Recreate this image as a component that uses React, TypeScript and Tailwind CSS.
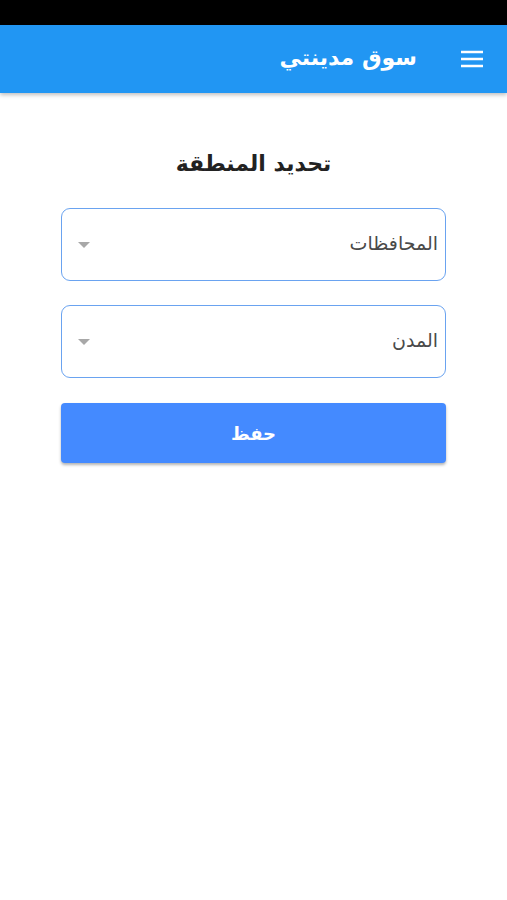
const arabic = { fontFamily: '"DejaVu Sans", "Noto Sans", sans-serif' };

function MenuIcon() {
  return (
    <svg width="24" height="18" viewBox="0 0 24 18" className="text-white">
      <path d="M1 2h22M1 9h22M1 16h22" stroke="currentColor" strokeWidth="2.6" />
    </svg>
  );
}

function SelectBox({ label }: { label: string }) {
  return (
    <div className="flex h-[73px] items-center justify-between rounded-[9px] border border-[#6aa3f0] bg-white pl-[16px] pr-[7px]">
      <span className="pb-[2px] text-[19px] text-[#4a4a4a]">{label}</span>
      <span className="h-0 w-0 border-x-[6px] border-t-[6px] border-x-transparent border-t-[#a8a8a8]" />
    </div>
  );
}

export default function App() {
  return (
    <div dir="rtl" className="min-h-[900px] w-full bg-white" style={arabic}>
      <div className="h-[25px] bg-black" />
      <header className="flex h-[68px] items-center bg-[#2196f3] pr-[23px] shadow-[0_2px_4px_rgba(0,0,0,0.25)]">
        <MenuIcon />
        <h1 className="mr-[43px] pb-[4px] text-[22px] font-bold text-white">سوق مدينتي</h1>
      </header>

      <main className="px-[61px] pt-[54px]">
        <h2 className="mb-[28px] text-center text-[22px] font-bold text-[#222]">تحديد المنطقة</h2>
        <div className="flex flex-col gap-[24px]">
          <SelectBox label="المحافظات" />
          <SelectBox label="المدن" />
          <button className="mt-[1px] h-[60px] rounded-[4px] bg-[#448aff] text-[18px] font-bold text-white shadow-[0_2px_3px_rgba(0,0,0,0.3)]">
            حفظ
          </button>
        </div>
      </main>
    </div>
  );
}
